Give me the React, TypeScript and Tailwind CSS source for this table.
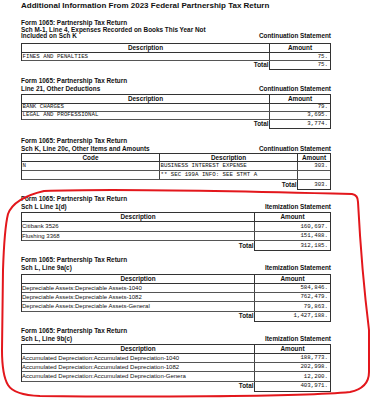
const SANS = "font-['Liberation_Sans',Arial,sans-serif]";
const MONO = "font-['Liberation_Mono','Courier_New',monospace] text-[5.75px]";

type Section = {
  wrap: string;
  subCls: string;
  sub: string[];
  statement: string;
  tableCls: string;
  grid: string;
  heads: string[];
  headCls: string;
  rowCls: string;
  rows: string[][];
  sansCols: number[];
  total: string;
  totalCls: string;
  totalBox: string;
};

const sections: Section[] = [
  {
    wrap: 'mt-[8px]',
    subCls: 'leading-[5.5px]',
    sub: ['Sch M-1, Line 4, Expenses Recorded on Books This Year Not', 'Included on Sch K'],
    statement: 'Continuation Statement',
    tableCls: 'mt-[5px]',
    grid: 'grid-cols-[1fr_61px]',
    heads: ['Description', 'Amount'],
    headCls: 'h-[9px]',
    rowCls: 'h-[8px]',
    rows: [['FINES AND PENALTIES', '75.']],
    sansCols: [],
    total: '75.',
    totalCls: 'h-[9px]',
    totalBox: 'w-[62px]',
  },
  {
    wrap: 'mt-[5.5px]',
    subCls: 'leading-[8px]',
    sub: ['Line 21, Other Deductions'],
    statement: 'Continuation Statement',
    tableCls: 'mt-[1.5px]',
    grid: 'grid-cols-[1fr_61px]',
    heads: ['Description', 'Amount'],
    headCls: 'h-[8.7px]',
    rowCls: 'h-[8px]',
    rows: [
      ['BANK CHARGES', '79.'],
      ['LEGAL AND PROFESSIONAL', '3,695.'],
    ],
    sansCols: [],
    total: '3,774.',
    totalCls: 'h-[9px]',
    totalBox: 'w-[62px]',
  },
  {
    wrap: 'mt-[7px]',
    subCls: 'leading-[8px]',
    sub: ['Sch K, Line 20c, Other Items and Amounts'],
    statement: 'Continuation Statement',
    tableCls: 'mt-[0.6px]',
    grid: 'grid-cols-[137px_138px_1fr]',
    heads: ['Code', 'Description', 'Amount'],
    headCls: 'h-[8px]',
    rowCls: 'h-[8.85px]',
    rows: [
      ['N', 'BUSINESS INTEREST EXPENSE', '303.'],
      ['', '** SEC 199A INFO: SEE STMT A', ''],
    ],
    sansCols: [],
    total: '303.',
    totalCls: 'h-[10px]',
    totalBox: 'w-[34px]',
  },
  {
    wrap: 'mt-[4px]',
    subCls: 'leading-[8px]',
    sub: ['Sch L Line 1(d)'],
    statement: 'Itemization Statement',
    tableCls: 'mt-[1.3px]',
    grid: 'grid-cols-[1fr_76px]',
    heads: ['Description', 'Amount'],
    headCls: 'h-[9px]',
    rowCls: 'h-[9.4px]',
    rows: [
      ['Citibank 3526', '160,697.'],
      ['Flushing 3368', '151,488.'],
    ],
    sansCols: [0],
    total: '312,185.',
    totalCls: 'h-[10px]',
    totalBox: 'w-[77px]',
  },
  {
    wrap: 'mt-[4.4px]',
    subCls: 'leading-[8px]',
    sub: ['Sch L, Line 9a(c)'],
    statement: 'Itemization Statement',
    tableCls: 'mt-[1.5px]',
    grid: 'grid-cols-[1fr_76px]',
    heads: ['Description', 'Amount'],
    headCls: 'h-[8.7px]',
    rowCls: 'h-[9.33px]',
    rows: [
      ['Depreciable Assets:Depreciable Assets-1040', '584,846.'],
      ['Depreciable Assets:Depreciable Assets-1082', '762,479.'],
      ['Depreciable Assets:Depreciable Assets-General', '79,863.'],
    ],
    sansCols: [0],
    total: '1,427,188.',
    totalCls: 'h-[10px]',
    totalBox: 'w-[77px]',
  },
  {
    wrap: 'mt-[4.1px]',
    subCls: 'leading-[8px]',
    sub: ['Sch L, Line 9b(c)'],
    statement: 'Itemization Statement',
    tableCls: 'mt-[1.2px]',
    grid: 'grid-cols-[1fr_76px]',
    heads: ['Description', 'Amount'],
    headCls: 'h-[8.7px]',
    rowCls: 'h-[9.33px]',
    rows: [
      ['Accumulated Depreciation:Accumulated Depreciation-1040', '188,773.'],
      ['Accumulated Depreciation:Accumulated Depreciation-1082', '202,998.'],
      ['Accumulated Depreciation:Accumulated Depreciation-Genera', '12,200.'],
    ],
    sansCols: [0],
    total: '403,971.',
    totalCls: 'h-[10px]',
    totalBox: 'w-[77px]',
  },
];

function Statement({ s }: { s: Section }) {
  const last = s.heads.length - 1;
  return (
    <div className={s.wrap}>
      <div className="h-[9px] text-[6.4px] font-bold leading-[9px]">Form 1065: Partnership Tax Return</div>
      <div className={`text-[6.4px] font-bold ${s.subCls}`}>
        {s.sub.slice(0, -1).map((l) => (
          <div key={l}>{l}</div>
        ))}
        <div className="flex justify-between whitespace-nowrap">
          <span>{s.sub[s.sub.length - 1]}</span>
          <span>{s.statement}</span>
        </div>
      </div>

      <div className={`border-x border-t border-[#333] leading-none ${s.tableCls}`}>
        <div className={`grid border-b border-[#333] ${s.grid} ${s.headCls}`}>
          {s.heads.map((h, i) => (
            <div
              key={h}
              className={`flex items-center justify-center text-[6.4px] font-bold ${i > 0 ? 'border-l border-[#333]' : ''}`}
            >
              {h}
            </div>
          ))}
        </div>
        {s.rows.map((r, ri) => (
          <div key={ri} className={`grid border-b border-[#555] ${s.grid} ${s.rowCls}`}>
            {r.map((c, i) => (
              <div
                key={i}
                className={`flex items-center overflow-hidden whitespace-nowrap ${i > 0 ? 'border-l border-[#444]' : ''} ${
                  i === last ? `justify-end pr-[2px] ${MONO}` : s.sansCols.includes(i) ? 'text-[6px]' : `pl-[0.5px] ${MONO}`
                }`}
              >
                {c}
              </div>
            ))}
          </div>
        ))}
      </div>

      <div className={`flex justify-end leading-none ${s.totalCls}`}>
        <div className="flex items-center pr-[0.5px] text-[6.4px] font-bold">Total</div>
        <div className={`flex items-center justify-end border-x border-b border-[#333] pr-[2px] ${MONO} ${s.totalBox}`}>
          {s.total}
        </div>
      </div>
    </div>
  );
}

export default function App() {
  return (
    <div className={`relative h-[400px] w-[373px] overflow-hidden bg-white text-[#111] ${SANS}`}>
      <div className="w-[331px] pl-[21px] pt-[2px]">
        <h1 className="h-[8px] whitespace-nowrap text-[8px] font-bold leading-[8px]">
          Additional Information From 2023 Federal Partnership Tax Return
        </h1>
        {sections.map((s) => (
          <Statement key={s.sub.join()} s={s} />
        ))}
      </div>

      {/* red highlight loop */}
      <svg className="pointer-events-none absolute inset-0" width="373" height="400" viewBox="0 0 373 400">
        <path
          d="M44 191 C90 189 200 190 352 194 Q358 195 358 202 C360 240 364 290 369 330 L369 372 Q369 388 350 392 C300 397 120 397 40 396 Q14 395 8 385 Q2 375 2 350 L3 270 C4 240 6 222 8 214 Q14 198 44 191 Z"
          fill="none"
          stroke="#e3171c"
          strokeWidth="2"
          strokeLinejoin="round"
        />
      </svg>
    </div>
  );
}
